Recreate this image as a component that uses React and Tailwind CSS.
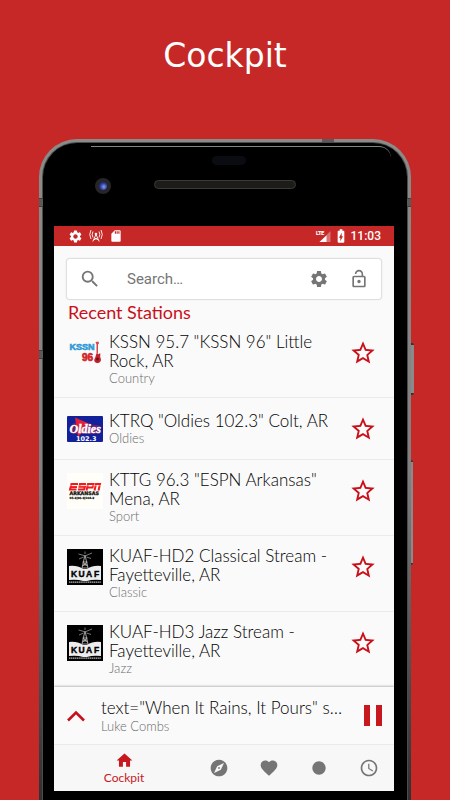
import {
    MdAccessTime, MdBatteryChargingFull, MdCircle, MdExplore, MdFavorite, MdHome,
    MdLockOpen, MdSdCard, MdSearch, MdSettings, MdStarBorder,
} from 'react-icons/md'

function KssnLogo() {
    return (
        <svg viewBox="0 0 36 36" className="w-9 h-9" fontFamily="Liberation Sans" fontWeight="bold" aria-hidden="true">
            <text x="2.500" y="15" fontSize="9" fill="#2f9ad6" stroke="#2f9ad6" strokeWidth=".6">KSSN</text>
            <text x="15" y="26" fontSize="10" fill="#d3262b" stroke="#d3262b" strokeWidth=".7">96</text>
            <path d="M28.500 7l3-.5.5 2-1 1v9h-1.500V9.500z" fill="#d9454a" />
            <path d="M30 18c1 1.500 2 1.500 3 0 1 2-.5 3 .5 5 1.500 3-1 5-3 5s-4.500-2-2.500-5c1-2 .5-3 2-5z" fill="#c8202a" />
            <circle cx="30.500" cy="24" r="1.500" fill="#5a1a20" />
        </svg>
    )
}

function OldiesLogo() {
    return (
        <svg viewBox="0 0 36 26" className="w-9" aria-hidden="true">
            <rect width="36" height="26" rx="1" fill="#12209a" />
            <path d="M8 1.500L23 8 11 21z" fill="#e0203a" />
            <path d="M3 14c0-6 5-9 8-6l20 1c3 2 3 7 0 9L8 18c-3 0-5-1-5-4z" fill="#d0203f" opacity=".45" />
            <text x="2.500" y="16.500" fontSize="12" fontFamily="Liberation Serif" fontStyle="italic" fontWeight="bold" fill="#fff" stroke="#fff" strokeWidth=".4">Oldies</text>
            <text x="9" y="24.500" fontSize="6.500" fontFamily="DejaVu Sans" fontWeight="bold" fill="#fff">102.3</text>
        </svg>
    )
}

function EspnLogo() {
    return (
        <svg viewBox="0 0 36 36" className="w-9 h-9" fontFamily="DejaVu Sans" fontWeight="bold" aria-hidden="true">
            <rect width="36" height="36" fill="#fffef8" />
            <g fill="none" stroke="#f01a1f" strokeWidth="2">
                <path d="M11 11H4.500L3 16.500h6.500M4 14h6" />
                <path d="M19 11h-6l-.5 2.800h5.500l-1 2.700h-6" />
                <path d="M19.500 17.500L21 11h5.500l-1 3.500h-5" />
                <path d="M27.500 17.500L29 11h4l-1.500 6.500" />
            </g>
            <path d="M2 12.700h32" stroke="#fffef8" strokeWidth=".5" />
            <text x="2.500" y="21.800" fontSize="4.800" fill="#111" stroke="#111" strokeWidth=".3">ARKANSAS</text>
            <text x="2.500" y="25.800" fontSize="2.800" fill="#111" stroke="#111" strokeWidth=".2">95.3|96.3|104.3</text>
        </svg>
    )
}

function KuafLogo() {
    return (
        <svg viewBox="0 0 36 36" className="w-9 h-9" aria-hidden="true">
            <rect width="36" height="36" fill="#000" />
            <g fill="none" stroke="#c8c8c8" strokeWidth=".8">
                <path d="M18 6l-3.500 15h7z M16.500 13h3M16 16h4M15.500 13l5 4M20.500 13l-5 4M15 19h6" />
                <path d="M17 6.500L11.500 5M19 6.500L25 4M16.500 8L12 10M19.500 8l4.500 1.500M18 5V2.500" strokeWidth=".6" />
            </g>
            <path d="M2 17q8-1 14 3h4q6-4 14-3v14q-8-1-14 1h-4q-6-2-14-1z" fill="#ededed" />
            <text y="28" fontSize="8.500" fontFamily="Liberation Sans" fontWeight="bold" fill="#000" stroke="#000" strokeWidth=".4">
                <tspan x="4">K</tspan><tspan x="11.500">U</tspan><tspan x="19">A</tspan><tspan x="27">F</tspan>
            </text>
            <path d="M2 33.200h32" stroke="#bbb" strokeWidth="1.200" strokeDasharray="1.400 .5" />
        </svg>
    )
}

function AntennaIcon() {
    return (
        <svg viewBox="0 0 14 14" className="w-[14px] h-[14px]" fill="none" stroke="#fff" strokeWidth=".9" aria-hidden="true">
            <path d="M2 1q-2.500 4.500 0 9M4 2.500q-1.700 3 0 6M12 1q2.500 4.500 0 9M10 2.500q1.700 3 0 6" />
            <path d="M7 5.500L3.800 12.500M7 5.500l3.200 7M5.500 9l4 2M8.500 9l-4 2" />
            <circle cx="7" cy="5" r=".9" fill="#fff" />
        </svg>
    )
}

function LteIcon() {
    return (
        <svg viewBox="0 0 16 14" className="w-4 h-[14px]" aria-hidden="true">
            <path d="M15.500 2v11h-11z" fill="#fff" opacity=".35" />
            <path d="M11.500 6.500V13H4.500z" fill="#fff" />
            <text x="1" y="6" fontSize="5" fontFamily="Roboto" fontWeight="bold" fill="#fff" stroke="#fff" strokeWidth=".2">LTE</text>
        </svg>
    )
}

const stations = [
    { name: 'KSSN 95.7 "KSSN 96" Little Rock, AR', genre: 'Country', Logo: KssnLogo },
    { name: 'KTRQ "Oldies 102.3" Colt, AR', genre: 'Oldies', Logo: OldiesLogo },
    { name: 'KTTG 96.3 "ESPN Arkansas" Mena, AR', genre: 'Sport', Logo: EspnLogo },
    { name: 'KUAF-HD2 Classical Stream - Fayetteville, AR', genre: 'Classic', Logo: KuafLogo },
    { name: 'KUAF-HD3 Jazz Stream - Fayetteville, AR', genre: 'Jazz', Logo: KuafLogo },
]

const tabs = [
    { label: 'Explore', icon: <MdExplore size={20} /> },
    { label: 'Favorites', icon: <MdFavorite size={20} /> },
    { label: 'Recordings', icon: <MdCircle size={16} /> },
    { label: 'History', icon: <MdAccessTime size={20} /> },
]

function StatusBar() {
    return (
        <div className="h-5 pl-3.5 pr-[13px] flex items-center justify-between bg-[#c62828] text-white">
            <div className="flex items-center gap-1.5">
                <MdSettings size={15} />
                <AntennaIcon />
                <MdSdCard size={14} />
            </div>
            <div className="flex items-center gap-0.5">
                <LteIcon />
                <MdBatteryChargingFull size={16} />
                <span className="font-[Roboto] text-[12px] leading-4 font-medium">11:03</span>
            </div>
        </div>
    )
}

function SearchBar() {
    return (
        <div className="mx-[13px] mt-[13px] h-10 px-3 flex items-center rounded-xs bg-white text-[#757575] shadow-[0_0_2px_rgba(0,0,0,0.4)]">
            <MdSearch size={22} className="shrink-0" />
            <input
                type="text"
                aria-label="Search"
                placeholder="Search…"
                className="ml-[26px] min-w-0 flex-1 bg-transparent font-[Roboto] font-normal text-[15px] outline-none placeholder:text-[#757575]"
            />
            <button aria-label="Settings" className="mr-5"><MdSettings size={20} /></button>
            <button aria-label="Lock"><MdLockOpen size={20} /></button>
        </div>
    )
}

function StationRow({ name, genre, Logo }) {
    return (
        <li className="flex items-start border-b border-[#ebebeb] last:border-b-0 pl-[13px] pr-[17px]">
            <div className="w-9 h-[61px] shrink-0 flex items-center"><Logo /></div>
            <div className="ml-1.5 flex-1 min-w-0 min-h-[61px] py-2.5 flex flex-col justify-center">
                <div className="text-[17px] leading-[19px] text-black">{name}</div>
                <div className="text-[13px] leading-[17px] text-[#6b6b6b]">{genre}</div>
            </div>
            <button aria-label={`Add ${name} to favorites`} className="h-[61px] shrink-0 text-[#c8101a]">
                <MdStarBorder size={28} />
            </button>
        </li>
    )
}

// plastic antenna lines across the metal frame
function AntennaBands() {
    return (
        <>
            <div className="absolute left-0 top-[59px] w-1 h-[9px] bg-[#5a5a5a] border-y border-[#404040]" />
            <div className="absolute right-0 top-[59px] w-1 h-[9px] bg-[#5a5a5a] border-y border-[#404040]" />
            <div className="absolute left-0 top-[211px] w-1 h-[9px] bg-[#5a5a5a] border-y border-[#404040]" />
            <div className="absolute right-[77px] top-0 w-3 h-[3px] bg-[#5a5a5a]" />
        </>
    )
}

export default function App() {
    return (
        <div className="min-h-screen flex flex-col overflow-hidden bg-[#c62828] font-['Lato',sans-serif] font-light">
            <h1 className="pt-9 h-[139px] text-center font-['DejaVu_Sans'] font-normal text-[33px] leading-10 text-white">Cockpit</h1>

            <div className="relative flex-1 mx-[39px] p-[3px] pb-0 rounded-t-[38px] bg-gradient-to-b from-[#8a8c8a] via-[#808080] to-[#303030] flex flex-col">
                <AntennaBands />
                {/* side buttons */}
                <div className="absolute left-full top-[204px] w-[3px] h-[52px] rounded-r-xs bg-[#8a8a8a] border-y-2 border-[#333]" />
                <div className="absolute left-full top-[321px] w-[2px] h-[105px] rounded-r-xs bg-[#8a8a8a] border-y-2 border-[#333]" />

                <div className="flex-1 px-px pt-px rounded-t-[35px] bg-[#4c4c4c] flex flex-col">
                    <div className="relative flex-1 pl-[11px] pr-[13px] pb-2.5 rounded-t-[34px] bg-black flex flex-col">
                        <div className="absolute top-[3px] left-12 right-4 h-3 border-t border-[#7d8783] rounded-tr-[24px]" />
                        <div className="h-[83px]">
                            <div className="absolute top-[13px] left-1/2 -ml-[13px] w-[34px] h-[9px] rounded-full bg-[#0b0c12]" />
                            <div className="absolute top-[35px] left-[52px] w-4 h-4 rounded-full bg-[#25252a] flex items-center justify-center">
                                <div className="w-2 h-2 rounded-full bg-radial-[at_60%_60%] from-[#8a9df0] via-[#2c3f9a] to-[#0c1030]" />
                            </div>
                            <div className="absolute top-[37px] left-1/2 -ml-[71px] w-[142px] h-[9px] rounded-full bg-[#1d1c19] border border-[#3a3a38]" />
                        </div>

                        <main className="flex-1 flex flex-col bg-[#fafafa]">
                            <StatusBar />
                            <SearchBar />
                            <h2 className="pl-3.5 pt-1 text-[18px] leading-[19px] font-normal text-[#c8101a]">Recent Stations</h2>
                            <ul>
                                {stations.map(s => <StationRow key={s.name} {...s} />)}
                            </ul>

                            {/* mini player */}
                            <div className="relative h-[57px] pl-[13px] pr-3 flex items-center shadow-[0_-1px_2px_rgba(0,0,0,0.25)] bg-[#fafafa]">
                                <button aria-label="Expand player" className="shrink-0">
                                    <svg viewBox="0 0 18 12" className="w-[18px] h-3" fill="none" stroke="#c8101a" strokeWidth="2.600">
                                        <path d="M1 10.500l8-8 8 8" />
                                    </svg>
                                </button>
                                <div className="ml-4 flex-1 min-w-0">
                                    <div className="truncate text-[17px] leading-5 text-black">text="When It Rains, It Pours" song_spot="M"</div>
                                    <div className="text-[13px] leading-4 text-[#6b6b6b]">Luke Combs</div>
                                </div>
                                <button aria-label="Pause" className="ml-5 flex gap-1.5">
                                    <span className="w-1.5 h-[21px] bg-[#c8181f]" />
                                    <span className="w-1.5 h-[21px] bg-[#c8181f]" />
                                </button>
                            </div>

                            <nav className="h-[47px] flex items-center border-t border-[#eee] bg-[#f7f7f7] text-[#757575]">
                                <button className="flex-1 flex flex-col items-center text-[#c8181f]">
                                    <MdHome size={19} />
                                    <span className="text-[12px] leading-4 font-normal">Cockpit</span>
                                </button>
                                {tabs.map(({ label, icon }) => (
                                    <button key={label} aria-label={label} className="w-[50px] flex justify-center">{icon}</button>
                                ))}
                            </nav>
                        </main>
                    </div>
                </div>
            </div>
        </div>
    )
}
